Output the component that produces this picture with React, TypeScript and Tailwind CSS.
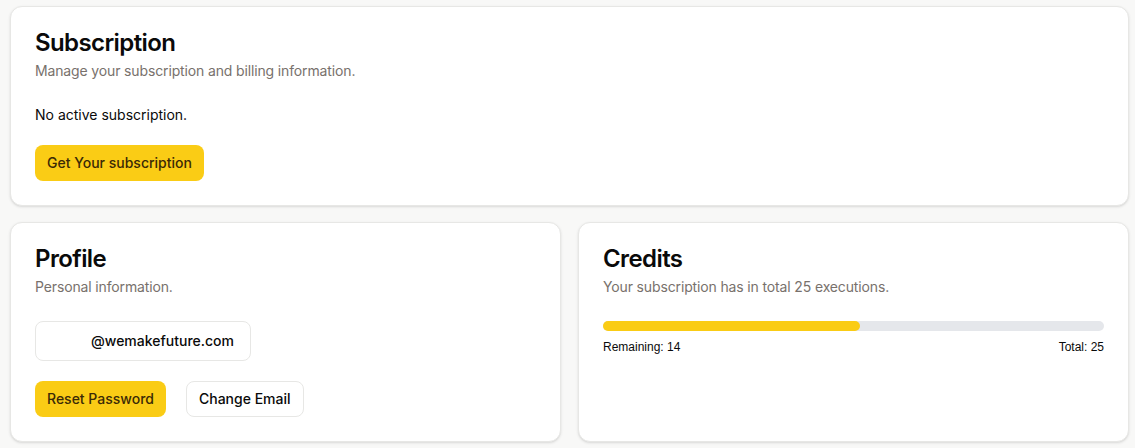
import React from 'react';

const Card = ({ children, className = '' }: { children: React.ReactNode; className?: string }) => (
  <div className={`rounded-xl border border-[#e7e7e5] bg-white shadow-sm ${className}`}>{children}</div>
);

const CardHeader = ({ title, description }: { title: string; description: string }) => (
  <div className="flex flex-col gap-1.5 p-6">
    <h3 className="text-2xl font-semibold leading-none tracking-tight text-[#0a0a0a]">{title}</h3>
    <p className="text-sm tracking-[-0.01em] text-[#78716c]">{description}</p>
  </div>
);

const yellowBtn =
  'h-9 rounded-lg bg-[#facc15] px-3 text-sm font-medium text-[#3b2a06]';

const App = () => {
  const remaining = 14;
  const total = 25;

  return (
    <div className="min-h-screen bg-[#f8f8f7] pl-[10px] pr-[6px] pt-[6px] pb-4 font-['Inter',sans-serif]">
      <div className="flex flex-col gap-4">
        <Card>
          <CardHeader
            title="Subscription"
            description="Manage your subscription and billing information."
          />
          <div className="px-6 pb-6">
            <p className="text-sm text-[#0a0a0a]">No active subscription.</p>
            <button className={`${yellowBtn} mt-5`}>Get Your subscription</button>
          </div>
        </Card>

        <div className="grid grid-cols-2 gap-[17px]">
          <Card>
            <CardHeader title="Profile" description="Personal information." />
            <div className="px-6 pb-6">
              <div className="inline-flex h-10 items-center rounded-lg border border-[#e7e7e5] px-4 text-sm font-medium text-[#0a0a0a]">
                <span className="inline-block w-[39px]" />
                @wemakefuture.com
              </div>
              <div className="mt-5 flex gap-5">
                <button className={yellowBtn}>Reset Password</button>
                <button className="h-9 rounded-lg border border-[#e7e7e5] bg-white px-3 text-sm font-medium text-[#0a0a0a]">
                  Change Email
                </button>
              </div>
            </div>
          </Card>

          <Card>
            <CardHeader
              title="Credits"
              description={`Your subscription has in total ${total} executions.`}
            />
            <div className="px-6 pb-6">
              <div className="h-2.5 w-full rounded-full bg-[#e5e7eb]">
                <div className="h-2.5 w-[51.2%] rounded-full bg-[#facc15]" />
              </div>
              <div className="mt-2 flex justify-between font-['Liberation_Sans',Arial,sans-serif] text-xs text-[#0a0a0a]">
                <span>Remaining: {remaining}</span>
                <span>Total: {total}</span>
              </div>
            </div>
          </Card>
        </div>
      </div>
    </div>
  );
};

export default App;
